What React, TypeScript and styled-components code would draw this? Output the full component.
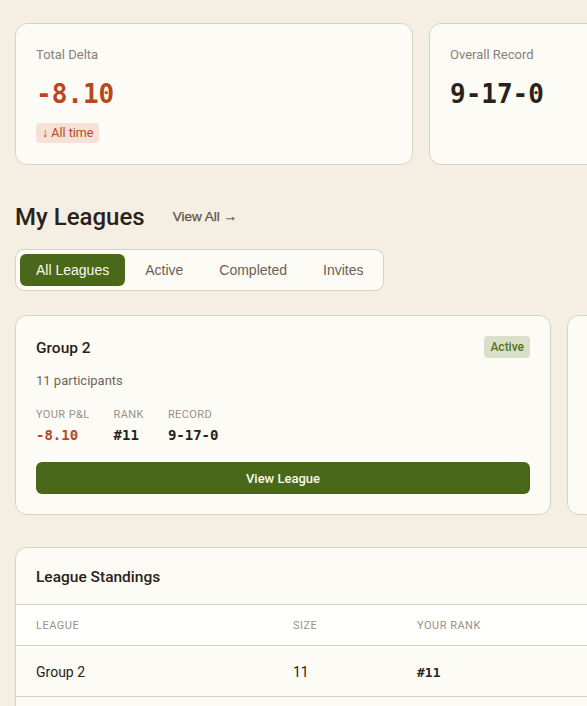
import React from "react";
import styled, { createGlobalStyle } from "styled-components";

const Global = createGlobalStyle`
  html, body { margin: 0; padding: 0; overflow: hidden; }
  body {
    background: #f5efe3;
    font-family: Roboto, "Open Sans", sans-serif;
    color: #2a2218;
  }
`;

const Page = styled.div`
  width: 1200px;
  padding: 23px 16px 40px 15px;
  box-sizing: border-box;
  display: flex;
  flex-direction: column;
`;

const StatGrid = styled.div`
  display: grid;
  grid-template-columns: repeat(3, 398px);
  gap: 16px;
`;

const Card = styled.div`
  background: #fcfbf6;
  border: 1px solid #d3d5bd;
  border-radius: 12px;
  box-sizing: border-box;
`;

const StatCard = styled(Card)`
  height: 142px;
  padding: 22px 20px 20px;
  display: flex;
  flex-direction: column;
  align-items: flex-start;
`;

const StatLabel = styled.div`
  font-size: 13px;
  line-height: 18px;
  color: #8a8076;
`;

const StatValue = styled.div<{ $tone?: "neg" | "neutral" }>`
  margin-top: 12px;
  font-family: "DejaVu Sans Mono", monospace;
  font-weight: 700;
  font-size: 26px;
  line-height: 36px;
  color: ${(p) => (p.$tone === "neg" ? "#b8471d" : "#2a2218")};
`;

const DeltaBadge = styled.span`
  margin-top: 11px;
  display: inline-block;
  background: #f5e1d5;
  color: #b8471d;
  font-size: 12.5px;
  line-height: 20px;
  padding: 0 6px;
  border-radius: 4px;
`;

const SectionHead = styled.div`
  margin-top: 37px;
  display: flex;
  align-items: center;
  gap: 28px;
`;

const SectionTitle = styled.h2`
  margin: 0;
  font-size: 24px;
  line-height: 30px;
  font-weight: 500;
  color: #2a2218;
`;

const LinkButton = styled.button`
  background: none;
  border: none;
  padding: 0;
  margin-top: -2px;
  font-family: "Liberation Sans", Arial, sans-serif;
  font-size: 13.5px;
  font-weight: 400;
  color: #5e5248;
  -webkit-text-stroke: 0.25px #5e5248;
  cursor: pointer;
`;

const Tabs = styled.div`
  margin-top: 17px;
  align-self: flex-start;
  display: flex;
  gap: 4px;
  padding: 4px;
  background: #fcfbf6;
  border: 1px solid #d3d5bd;
  border-radius: 9px;
`;

const Tab = styled.button<{ $active?: boolean }>`
  height: 32px;
  padding: 0 16px;
  border: none;
  border-radius: 6px;
  font-family: "Liberation Sans", Arial, sans-serif;
  font-size: 14px;
  background: ${(p) => (p.$active ? "#4a6819" : "transparent")};
  color: ${(p) => (p.$active ? "#fbf8ee" : "#6b5f55")};
  cursor: pointer;
`;

const LeagueGrid = styled.div`
  margin-top: 24px;
  display: grid;
  grid-template-columns: repeat(2, 536px);
  gap: 16px;
`;

const LeagueCard = styled(Card)`
  height: 200px;
  padding: 20px;
  display: flex;
  flex-direction: column;
`;

const LeagueHeader = styled.div`
  display: flex;
  justify-content: space-between;
  align-items: center;
  height: 22px;
`;

const LeagueName = styled.div`
  font-size: 15.5px;
  font-weight: 500;
  color: #2a2218;
  padding-top: 2px;
`;

const StatusBadge = styled.span`
  background: #dadfca;
  color: #557322;
  font-size: 12px;
  font-weight: 500;
  line-height: 22px;
  padding: 0 6px;
  border-radius: 4px;
`;

const Participants = styled.div`
  margin-top: 13px;
  font-size: 13px;
  line-height: 20px;
  color: #6f645a;
`;

const MiniStats = styled.div`
  margin-top: 16px;
  display: flex;
  gap: 24px;
`;

const MiniStat = styled.div`
  display: flex;
  flex-direction: column;
  gap: 3px;
`;

const MiniLabel = styled.div`
  font-size: 11px;
  line-height: 15px;
  letter-spacing: 0.4px;
  text-transform: uppercase;
  color: #9a9086;
`;

const MiniValue = styled.div<{ $neg?: boolean }>`
  font-family: "DejaVu Sans Mono", monospace;
  font-weight: 700;
  font-size: 14px;
  line-height: 20px;
  color: ${(p) => (p.$neg ? "#b8471d" : "#2a2218")};
`;

const PrimaryButton = styled.button`
  margin-top: 17px;
  height: 32px;
  width: 100%;
  border: none;
  border-radius: 6px;
  background: #4a6819;
  color: #fbf8ee;
  font-family: Roboto, sans-serif;
  font-size: 13px;
  font-weight: 500;
  cursor: pointer;
`;

const StandingsCard = styled(Card)`
  margin-top: 32px;
  overflow: hidden;
`;

const StandingsHead = styled.div`
  padding: 19px 20px 17px;
  font-size: 15.5px;
  line-height: 20px;
  font-weight: 500;
  border-bottom: 1px solid #d3d5bd;
`;

const Row = styled.div<{ $head?: boolean }>`
  display: grid;
  grid-template-columns: 257px 124px 1fr;
  align-items: center;
  padding: 0 20px;
  height: ${(p) => (p.$head ? "40px" : "50px")};
  background: ${(p) => (p.$head ? "#fffffd" : "transparent")};
  border-bottom: 1px solid #d3d5bd;
`;

const HeadCell = styled.div`
  font-size: 11px;
  text-transform: uppercase;
  letter-spacing: 0.5px;
  color: #9a9086;
  padding-top: 1px;
`;

const Cell = styled.div<{ $mono?: boolean }>`
  color: #2a2218;
  padding-top: 2px;
  font-family: ${(p) => (p.$mono ? '"DejaVu Sans Mono", monospace' : "inherit")};
  font-weight: ${(p) => (p.$mono ? 600 : 400)};
  font-size: ${(p) => (p.$mono ? "13px" : "14px")};
`;

export default function App() {
  return (
    <>
      <Global />
      <Page>
        <StatGrid>
          <StatCard>
            <StatLabel>Total Delta</StatLabel>
            <StatValue $tone="neg">-8.10</StatValue>
            <DeltaBadge>↓ All time</DeltaBadge>
          </StatCard>
          <StatCard>
            <StatLabel>Overall Record</StatLabel>
            <StatValue>9-17-0</StatValue>
          </StatCard>
          <StatCard>
            <StatLabel>Leagues</StatLabel>
            <StatValue>2</StatValue>
          </StatCard>
        </StatGrid>

        <SectionHead>
          <SectionTitle>My Leagues</SectionTitle>
          <LinkButton>View All →</LinkButton>
        </SectionHead>

        <Tabs>
          <Tab $active>All Leagues</Tab>
          <Tab>Active</Tab>
          <Tab>Completed</Tab>
          <Tab>Invites</Tab>
        </Tabs>

        <LeagueGrid>
          <LeagueCard>
            <LeagueHeader>
              <LeagueName>Group 2</LeagueName>
              <StatusBadge>Active</StatusBadge>
            </LeagueHeader>
            <Participants>11 participants</Participants>
            <MiniStats>
              <MiniStat>
                <MiniLabel>Your P&amp;L</MiniLabel>
                <MiniValue $neg>-8.10</MiniValue>
              </MiniStat>
              <MiniStat>
                <MiniLabel>Rank</MiniLabel>
                <MiniValue>#11</MiniValue>
              </MiniStat>
              <MiniStat>
                <MiniLabel>Record</MiniLabel>
                <MiniValue>9-17-0</MiniValue>
              </MiniStat>
            </MiniStats>
            <PrimaryButton>View League</PrimaryButton>
          </LeagueCard>
          <LeagueCard />
        </LeagueGrid>

        <StandingsCard>
          <StandingsHead>League Standings</StandingsHead>
          <Row $head>
            <HeadCell>League</HeadCell>
            <HeadCell>Size</HeadCell>
            <HeadCell>Your Rank</HeadCell>
          </Row>
          <Row>
            <Cell>Group 2</Cell>
            <Cell>11</Cell>
            <Cell $mono>#11</Cell>
          </Row>
          <Row>
            <Cell>Group 1</Cell>
            <Cell>8</Cell>
            <Cell $mono>#5</Cell>
          </Row>
        </StandingsCard>
      </Page>
    </>
  );
}
